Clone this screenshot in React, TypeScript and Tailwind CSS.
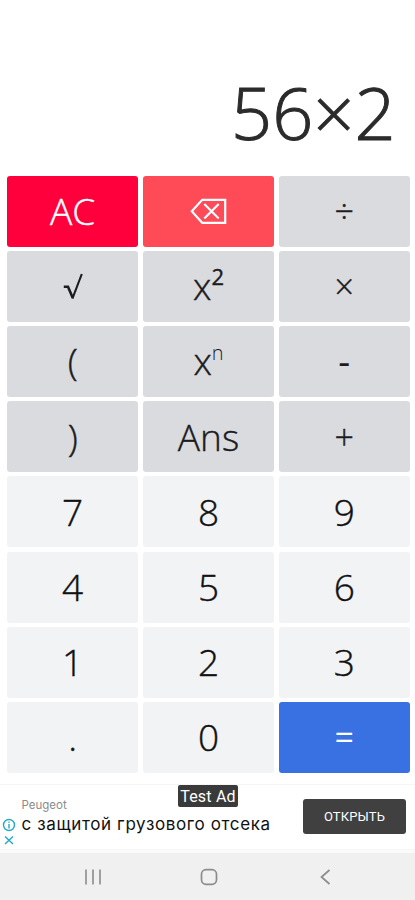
import type { ReactNode } from 'react';
import clsx from 'clsx';

type Key = {
    id: string;
    label: ReactNode;
    tone?: string;
};

const OPERATOR = 'bg-[#dadbdf] text-[#1c1c1e]';
const DIGIT = 'bg-[#f2f3f5] text-[#111111]';

function BackspaceIcon() {
    return (
        <svg className="mt-[1px] ml-[1px] w-[37px] h-[27px]" viewBox="0 0 37 27" fill="none" stroke="#ffffff" strokeWidth="2.2">
            <path d="M12.2 1.8H35.2V24.8H12.2L1.8 13.3Z" />
            <path d="M14.3 6L28.7 20.6M28.7 6L14.3 20.6" />
        </svg>
    );
}

function RootIcon() {
    return (
        <svg className="w-[20px] h-[27px]" viewBox="0 0 20 27" fill="none" stroke="#1c1c1e">
            <path d="M0.8 13.7H5L9.7 24.8" strokeWidth="2.6" />
            <path d="M9.4 25.6L18.8 1" strokeWidth="2.1" />
        </svg>
    );
}

const keys: Key[] = [
    { id: 'clear', label: 'AC', tone: 'bg-[#ff003d] text-white' },
    { id: 'backspace', label: <BackspaceIcon />, tone: 'bg-[#ff4a58] text-white' },
    { id: 'divide', label: <span className="text-[34px]">÷</span>, tone: OPERATOR },
    { id: 'root', label: <RootIcon />, tone: OPERATOR },
    {
        id: 'square',
        label: (
            <span className="flex items-start">
                x<span className="text-[22px] leading-[31px] font-normal">2</span>
            </span>
        ),
        tone: OPERATOR,
    },
    { id: 'multiply', label: <span className="text-[34px]">×</span>, tone: OPERATOR },
    { id: 'open', label: '(', tone: OPERATOR },
    {
        id: 'power',
        label: (
            <span className="flex items-start">
                x<span className="text-[20px] leading-[34px] [-webkit-text-stroke:0px]">n</span>
            </span>
        ),
        tone: OPERATOR,
    },
    { id: 'minus', label: <span className="font-normal [-webkit-text-stroke:0px]">-</span>, tone: OPERATOR },
    { id: 'close', label: ')', tone: OPERATOR },
    { id: 'ans', label: 'Ans', tone: OPERATOR },
    { id: 'plus', label: <span className="text-[34px]">+</span>, tone: OPERATOR },
    { id: '7', label: '7' },
    { id: '8', label: '8' },
    { id: '9', label: '9' },
    { id: '4', label: '4' },
    { id: '5', label: '5' },
    { id: '6', label: '6' },
    { id: '1', label: '1' },
    { id: '2', label: '2' },
    { id: '3', label: '3' },
    { id: 'dot', label: '.' },
    { id: '0', label: '0' },
    {
        id: 'equals',
        label: <span className="text-[34px] font-normal [-webkit-text-stroke:0px]">=</span>,
        tone: 'bg-[#3971e3] text-white',
    },
];

function AdBanner() {
    return (
        <div className="relative flex h-[66px] border-y border-[#f5f5f5] bg-white">
            <div className="flex w-[21.5px] flex-col items-center pt-[33px]">
                <svg className="-ml-[3px] h-[28px] w-[14px]" viewBox="0 0 14 28" fill="none" stroke="#23a9c2" strokeWidth="1.4">
                    <circle cx="7" cy="7" r="5.5" />
                    <path d="M7 6V10.5M7 3.4V4.8" />
                    <path d="M3 18.5L11 26M11 18.5L3 26" />
                </svg>
            </div>
            <div className="flex-1 pt-[12px]">
                <div className="font-['Inter',sans-serif] text-[11.5px] leading-[16px] text-[#8b8b8b]">Peugeot</div>
                <div className="whitespace-nowrap font-['Inter',sans-serif] text-[17px] leading-[22px] tracking-[0.62px] text-[#111111]">
                    с защитой грузового отсека
                </div>
            </div>
            <button className="mr-[9px] mt-[14px] h-[35px] w-[103px] rounded-[3px] bg-[#404040] font-['Roboto',sans-serif] text-[13px] tracking-[0.15px] text-white">
                ОТКРЫТЬ
            </button>
            <div className="absolute left-[178px] top-0 h-[22px] w-[60px] rounded-[2px] bg-[#3a3a3a] text-center font-['Roboto',sans-serif] text-[16px] leading-[23px] tracking-[0.2px] text-white">
                Test Ad
            </div>
        </div>
    );
}

function NavBar() {
    return (
        <div className="flex h-[47px] items-center bg-[#f0f0f0] pl-[83.5px]">
            <svg className="h-[20px] w-[18px]" viewBox="0 0 18 20" stroke="#8c8c8c" strokeWidth="1.6">
                <path d="M2 2.5V17.5M9 2.5V17.5M16 2.5V17.5" />
            </svg>
            <svg className="ml-[98px] h-[18px] w-[18px]" viewBox="0 0 18 18" fill="none" stroke="#8c8c8c" strokeWidth="1.7">
                <rect x="1.5" y="1.7" width="15" height="14.6" rx="4.5" />
            </svg>
            <svg className="ml-[101px] h-[18px] w-[12px]" viewBox="0 0 12 18" fill="none" stroke="#8c8c8c" strokeWidth="1.7">
                <path d="M10.5 2L2.5 9L10.5 16" />
            </svg>
        </div>
    );
}

export default function App() {
    return (
        <div className="flex h-[900px] w-[415px] flex-col overflow-hidden bg-white font-['Open_Sans',sans-serif]">
            <div className="flex h-[175.5px] items-end justify-end pb-[14.5px] pr-[19.5px] text-[72px] leading-[98px] font-light text-[#2b2b2b] [-webkit-text-stroke:1px]">
                56×2
            </div>
            <div className="grid h-[597.5px] grid-cols-3 grid-rows-8 gap-x-[4.5px] gap-y-[4.2px] pl-[7px] pr-[5px]">
                {keys.map((key) => (
                    <button
                        key={key.id}
                        className={clsx(
                            'flex items-center justify-center rounded-[3px] text-[37px] leading-[50px] font-light [-webkit-text-stroke:0.4px]',
                            key.tone ?? DIGIT,
                        )}
                    >
                        {key.label}
                    </button>
                ))}
            </div>
            <div className="mt-auto">
                <AdBanner />
                <div className="h-[3px] bg-[#fafafa]" />
                <NavBar />
            </div>
        </div>
    );
}
